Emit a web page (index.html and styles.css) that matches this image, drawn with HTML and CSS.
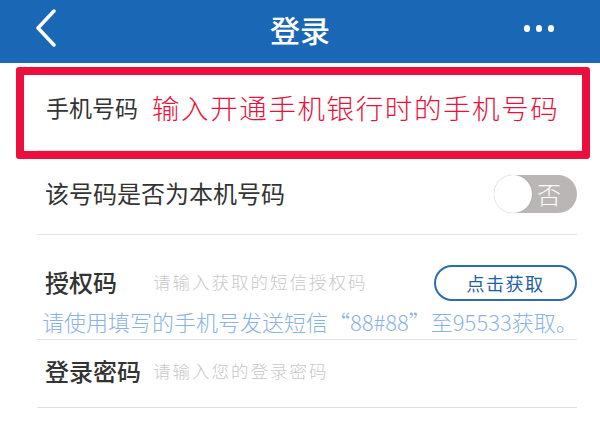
FILE: index.html
```html
<!DOCTYPE html>
<html lang="zh-CN">
<head>
    <meta charset="UTF-8">
    <meta name="viewport" content="width=device-width, initial-scale=1.0">
    <title>登录</title>
    <link rel="stylesheet" href="styles.css">
</head>
<body>
    <div class="header">
        <span class="back">
            <svg width="22" height="38" viewBox="0 0 22 38">
                <path d="M19 2 L3 19 L19 36" fill="none" stroke="#fff" stroke-width="3.5" stroke-linecap="round" stroke-linejoin="round"/>
            </svg>
        </span>
        <h1 class="title">登录</h1>
        <span class="more"><i></i><i></i><i></i></span>
    </div>

    <div class="highlight">
        <div class="phone-row">
            <span class="phone-label">手机号码</span>
            <span class="phone-tip">输入开通手机银行时的手机号码</span>
        </div>
    </div>

    <div class="form">
        <div class="row row-switch">
            <span class="label">该号码是否为本机号码</span>
            <span class="switch">
                <span class="knob"></span>
                <span class="switch-text">否</span>
            </span>
        </div>

        <div class="row row-code">
            <div class="code-line">
                <span class="label field-label bold">授权码</span>
                <span class="placeholder">请输入获取的短信授权码</span>
                <button class="get-code">点击获取</button>
            </div>
            <p class="hint">请使用填写的手机号发送短信“88#88”至95533获取。</p>
        </div>

        <div class="row row-pwd">
            <span class="label field-label bold">登录密码</span>
            <span class="placeholder">请输入您的登录密码</span>
        </div>
    </div>
</body>
</html>
```

FILE: styles.css
```css
body {
    margin: 0;
    background-color: #fff;
    font-family: "Noto Sans CJK SC", "Noto Sans", sans-serif;
    font-weight: 300;
    color: #333;
}
.header {
    height: 63px;
    background-color: #1a68b5;
    display: flex;
    align-items: center;
    justify-content: space-between;
    padding: 0 46px 0 35px;
    position: relative;
}
.back {
    display: flex;
    margin-top: -8px;
}
.title {
    position: absolute;
    left: 0;
    right: 0;
    top: 0;
    margin: 0;
    text-align: center;
    color: #fff;
    font-size: 30px;
    font-weight: 500;
    line-height: 58px;
    pointer-events: none;
}
.more {
    display: flex;
    gap: 5.5px;
    margin-top: -6px;
}
.more i {
    width: 6.5px;
    height: 6.5px;
    border-radius: 50%;
    background-color: #fff;
}
.highlight {
    margin: 4px 10px 0 16px;
    border: 8px solid #ec0f3e;
    border-radius: 3px;
}
.phone-row {
    height: 76px;
    margin-left: 13px;
    padding-left: 9px;
    border-bottom: 1px solid #e2e2e2;
    display: flex;
    align-items: center;
    box-sizing: border-box;
}
.phone-row span {
    margin-top: -12px;
}
.phone-label {
    font-size: 23px;
    font-weight: 400;
    color: #333;
}
.phone-tip {
    font-size: 27.5px;
    letter-spacing: 1.6px;
    color: #e8123c;
    margin-left: 14px;
}
.form {
    margin: 0 23px 0 37px;
}
.row {
    border-bottom: 1px solid #e2e2e2;
    padding-left: 8px;
}
.label {
    font-size: 24px;
    font-weight: 400;
    color: #333;
}
.bold {
    font-weight: 500;
}
.row-switch {
    height: 75px;
    display: flex;
    align-items: center;
    justify-content: space-between;
}
.row-switch .label {
    margin-top: -8px;
}
.switch {
    width: 83px;
    height: 38px;
    border-radius: 19px;
    background-color: #bab6b6;
    display: flex;
    align-items: center;
    margin-top: -6px;
}
.knob {
    width: 38px;
    height: 38px;
    border-radius: 50%;
    background-color: #fff;
    box-shadow: 0 0 2px rgba(0, 0, 0, 0.15);
}
.switch-text {
    color: #fff;
    font-size: 24px;
    margin-left: 5px;
}
.row-code {
    padding-top: 26px;
    padding-bottom: 3px;
}
.code-line {
    display: flex;
    align-items: center;
}
.field-label {
    width: 108px;
    flex-shrink: 0;
}
.placeholder {
    font-size: 17.5px;
    letter-spacing: 2px;
    color: #c8c8c8;
    flex: 1;
}
.get-code {
    width: 143px;
    height: 36px;
    border: 2px solid #2e6cb0;
    border-radius: 18px;
    background-color: #fff;
    color: #2560a5;
    font-family: inherit;
    font-size: 18px;
    letter-spacing: 1.5px;
    font-weight: 400;
    padding: 0;
    margin-top: 4px;
}
.hint {
    margin: 5px 0 0 -3px;
    font-size: 22px;
    color: #8ab3e4;
    white-space: nowrap;
    line-height: 30px;
}
.row-pwd {
    height: 67px;
    display: flex;
    align-items: center;
}
.row-pwd span {
    margin-top: -6px;
}
```
